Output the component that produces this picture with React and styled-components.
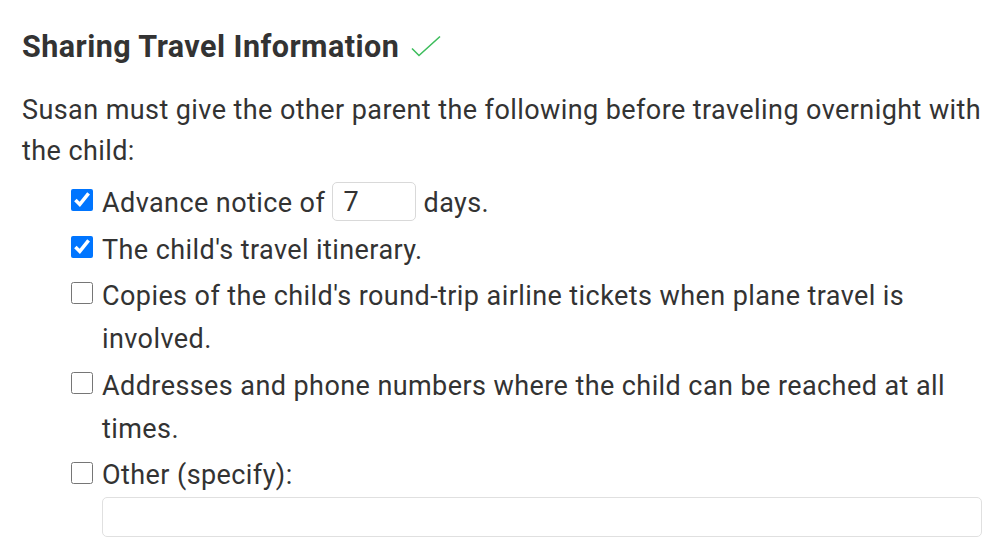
import React from "react";
import styled, { createGlobalStyle } from "styled-components";

const Global = createGlobalStyle`
  html, body { margin: 0; padding: 0; background: #fff; }
  body { font-family: Roboto, "Liberation Sans", sans-serif; color: #333; }
`;

const Page = styled.div`
  padding: 24px 18px 0 22px;
`;

const Heading = styled.h2`
  margin: 0;
  display: flex;
  align-items: center;
  gap: 11px;
  font-size: 30.5px;
  font-weight: 700;
  letter-spacing: 0.45px;
  line-height: 46px;
  color: #333;
`;

const Para = styled.p`
  margin: 20px 0 0;
  font-size: 27px;
  letter-spacing: 0.42px;
  line-height: 41px;
`;

const List = styled.div`
  display: flex;
  flex-direction: column;
  gap: 3.6px;
  padding-left: 48px;
  margin-top: 10px;
`;

const Row = styled.label`
  display: grid;
  grid-template-columns: 32px 1fr;
  align-items: start;
  font-size: 27px;
  letter-spacing: 0.42px;
  line-height: 43px;
`;

const Box = styled.input.attrs({ type: "checkbox" })`
  width: 22px;
  height: 22px;
  margin: 7.3px 0 0 1px;
  accent-color: #0075ff;
`;

const Text = styled.span`
  display: block;
`;

const DaysInput = styled.input`
  width: 84px;
  height: 39px;
  box-sizing: border-box;
  border: 1px solid #d9d9d9;
  border-radius: 5px;
  font: inherit;
  line-height: normal;
  padding: 0 10px;
  margin: 0;
  vertical-align: middle;
  color: #333;
  position: relative;
  top: -3px;
`;

const WideInput = styled.input`
  display: block;
  width: 100%;
  height: 40px;
  box-sizing: border-box;
  border: 1px solid #e0e0e0;
  border-radius: 5px;
  margin-top: 0;
  font: inherit;
  line-height: normal;
`;

const Tick = () => (
  <svg width="32" height="24" viewBox="0 0 32 24" fill="none">
    <path d="M2 13.5 L9 20.5 L30 1.5" stroke="#3dbd5c" strokeWidth="1.6" />
  </svg>
);

export default function App() {
  return (
    <Page>
      <Global />
      <Heading>
        Sharing Travel Information <Tick />
      </Heading>
      <Para>
        Susan must give the other parent the following before traveling overnight with the child:
      </Para>
      <List>
        <Row>
          <Box defaultChecked />
          <Text>
            Advance notice of <DaysInput defaultValue="7" /> days.
          </Text>
        </Row>
        <Row>
          <Box defaultChecked />
          <Text>The child's travel itinerary.</Text>
        </Row>
        <Row>
          <Box />
          <Text>Copies of the child's round-trip airline tickets when plane travel is involved.</Text>
        </Row>
        <Row>
          <Box />
          <Text>Addresses and phone numbers where the child can be reached at all times.</Text>
        </Row>
        <Row>
          <Box />
          <Text>
            Other (specify):
            <WideInput />
          </Text>
        </Row>
      </List>
    </Page>
  );
}
